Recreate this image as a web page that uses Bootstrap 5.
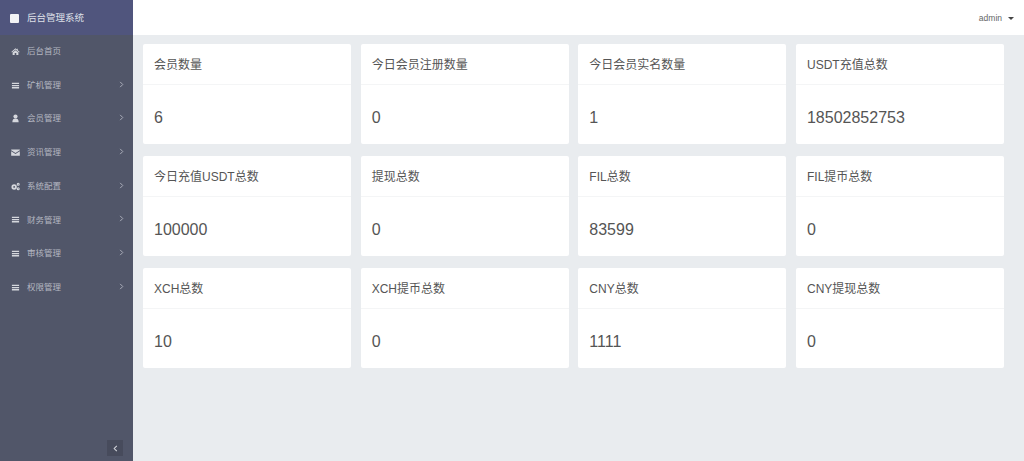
<!DOCTYPE html>
<html lang="zh">
<head>
<meta charset="utf-8">
<title>后台管理系统</title>
<link href="https://cdn.jsdelivr.net/npm/bootstrap@5.3.0/dist/css/bootstrap.min.css" rel="stylesheet">
<style>
html,body{height:100%;}
body{font-family:"Liberation Sans","Noto Sans CJK SC",sans-serif;background:#e9ecef;overflow:hidden;color:#555;}
.shell{height:461px;}
.side{width:133px;flex:none;background:#515669;color:#c4c7d0;}
.brand{height:35px;background:#50557d;color:#dfe0e8;font-size:9.5px;padding:1px 0 0 10px;gap:8px;}
.brand-box{width:9px;height:9px;background:#f2f2f5;border-radius:1px;}
.menu-row{height:33.7px;padding:0 9px 0 11px;font-size:8.5px;color:#b4b7c1;}
.menu-list{margin-top:-.4px;}
.menu-ico{width:9px;height:9px;margin-right:7px;fill:#d5d7dd;flex:none;}
.chev{width:6px;height:7px;fill:none;stroke:#b6b9c3;stroke-width:1;margin-left:auto;margin-top:-2px;}
.fold{width:16px;height:16px;background:#474b5c;margin:0 10px 5px auto;}
.fold svg{width:5px;height:7px;fill:none;stroke:#d5d7dd;stroke-width:1.2;}
.topbar{height:35px;background:#fff;font-size:8.5px;color:#666;padding:1px 10px 0 0;}
.caret-mark{width:0;height:0;border-left:3px solid transparent;border-right:3px solid transparent;border-top:3px solid #444;margin-left:6px;}
.stat-grid{display:grid;grid-template-columns:repeat(4,208px);column-gap:9.67px;row-gap:12px;padding:9px 0 0 10px;}
.stat{height:100px;background:#fff;border-radius:2px;}
.stat-head{height:41px;padding:1px 0 0 11px;font-size:12px;color:#555;border-bottom:1px solid #f4f5f6;}
.stat-body{height:59px;padding:7px 0 0 11px;font-size:16px;color:#555;}
</style>
</head>
<body>
<div class="shell d-flex">
  <aside class="side d-flex flex-column">
    <div class="brand d-flex align-items-center"><span class="brand-box"></span><span>后台管理系统</span></div>
    <nav class="menu-list d-flex flex-column flex-grow-1">
      <div class="menu-row d-flex align-items-center"><svg class="menu-ico" viewBox="0 0 10 10"><path d="M5 1.500 .5 5.400l.5.600L5 2.800 9 6l.5-.600-2-1.700V2H6.400v.800zM1.800 6.200V9h2.300V6.800h1.800V9h2.300V6.200L5 3.600z"/></svg>后台首页</div>
      <div class="menu-row d-flex align-items-center"><svg class="menu-ico" viewBox="0 0 10 10"><path d="M1 2h8v1.400H1zM1 4.400h8v1.400H1zM1 6.800h8v1.400H1z"/></svg>矿机管理<svg class="chev" viewBox="0 0 6 8"><path d="M2 1l3 3-3 3"/></svg></div>
      <div class="menu-row d-flex align-items-center"><svg class="menu-ico" viewBox="0 0 10 10"><circle cx="5" cy="2.800" r="2.300"/><path d="M1.500 9.300c0-3.300 1.300-4.300 3.500-4.300s3.500 1 3.500 4.300z"/></svg>会员管理<svg class="chev" viewBox="0 0 6 8"><path d="M2 1l3 3-3 3"/></svg></div>
      <div class="menu-row d-flex align-items-center"><svg class="menu-ico" viewBox="0 0 10 10"><path d="M.2 1.800h9.600v.800L5 5.600.2 2.600zM.2 3.700 5 6.700l4.800-3v4.800H.2z"/></svg>资讯管理<svg class="chev" viewBox="0 0 6 8"><path d="M2 1l3 3-3 3"/></svg></div>
      <div class="menu-row d-flex align-items-center"><svg class="menu-ico" viewBox="0 0 10 10"><path fill-rule="evenodd" d="M3.500 2.500a3 3 0 1 1 0 6 3 3 0 0 1 0-6zm0 2a1 1 0 1 0 0 2 1 1 0 0 0 0-2z"/><path fill-rule="evenodd" d="M8 .8a1.700 1.700 0 1 1 0 3.400A1.700 1.700 0 0 1 8 .8zm0 1.200a.5.500 0 1 0 0 1 .5.500 0 0 0 0-1zM8 5.800a1.700 1.700 0 1 1 0 3.400 1.700 1.700 0 0 1 0-3.400zM8 7a.5.500 0 1 0 0 1 .5.500 0 0 0 0-1z"/></svg>系统配置<svg class="chev" viewBox="0 0 6 8"><path d="M2 1l3 3-3 3"/></svg></div>
      <div class="menu-row d-flex align-items-center"><svg class="menu-ico" viewBox="0 0 10 10"><path d="M1 2h8v1.400H1zM1 4.400h8v1.400H1zM1 6.800h8v1.400H1z"/></svg>财务管理<svg class="chev" viewBox="0 0 6 8"><path d="M2 1l3 3-3 3"/></svg></div>
      <div class="menu-row d-flex align-items-center"><svg class="menu-ico" viewBox="0 0 10 10"><path d="M1 2h8v1.400H1zM1 4.400h8v1.400H1zM1 6.800h8v1.400H1z"/></svg>审核管理<svg class="chev" viewBox="0 0 6 8"><path d="M2 1l3 3-3 3"/></svg></div>
      <div class="menu-row d-flex align-items-center"><svg class="menu-ico" viewBox="0 0 10 10"><path d="M1 2h8v1.400H1zM1 4.400h8v1.400H1zM1 6.800h8v1.400H1z"/></svg>权限管理<svg class="chev" viewBox="0 0 6 8"><path d="M2 1l3 3-3 3"/></svg></div>
      <div class="fold mt-auto d-flex align-items-center justify-content-center"><svg viewBox="0 0 5 8"><path d="M4 1 1 4l3 3"/></svg></div>
    </nav>
  </aside>
  <main class="flex-grow-1">
    <header class="topbar d-flex align-items-center justify-content-end">admin<span class="caret-mark"></span></header>
    <section class="stat-grid">
      <div class="stat"><div class="stat-head d-flex align-items-center">会员数量</div><div class="stat-body d-flex align-items-center">6</div></div>
      <div class="stat"><div class="stat-head d-flex align-items-center">今日会员注册数量</div><div class="stat-body d-flex align-items-center">0</div></div>
      <div class="stat"><div class="stat-head d-flex align-items-center">今日会员实名数量</div><div class="stat-body d-flex align-items-center">1</div></div>
      <div class="stat"><div class="stat-head d-flex align-items-center">USDT充值总数</div><div class="stat-body d-flex align-items-center">18502852753</div></div>
      <div class="stat"><div class="stat-head d-flex align-items-center">今日充值USDT总数</div><div class="stat-body d-flex align-items-center">100000</div></div>
      <div class="stat"><div class="stat-head d-flex align-items-center">提现总数</div><div class="stat-body d-flex align-items-center">0</div></div>
      <div class="stat"><div class="stat-head d-flex align-items-center">FIL总数</div><div class="stat-body d-flex align-items-center">83599</div></div>
      <div class="stat"><div class="stat-head d-flex align-items-center">FIL提币总数</div><div class="stat-body d-flex align-items-center">0</div></div>
      <div class="stat"><div class="stat-head d-flex align-items-center">XCH总数</div><div class="stat-body d-flex align-items-center">10</div></div>
      <div class="stat"><div class="stat-head d-flex align-items-center">XCH提币总数</div><div class="stat-body d-flex align-items-center">0</div></div>
      <div class="stat"><div class="stat-head d-flex align-items-center">CNY总数</div><div class="stat-body d-flex align-items-center">1111</div></div>
      <div class="stat"><div class="stat-head d-flex align-items-center">CNY提现总数</div><div class="stat-body d-flex align-items-center">0</div></div>
    </section>
  </main>
</div>
<script src="https://cdn.jsdelivr.net/npm/bootstrap@5.3.0/dist/js/bootstrap.bundle.min.js"></script>
</body>
</html>
